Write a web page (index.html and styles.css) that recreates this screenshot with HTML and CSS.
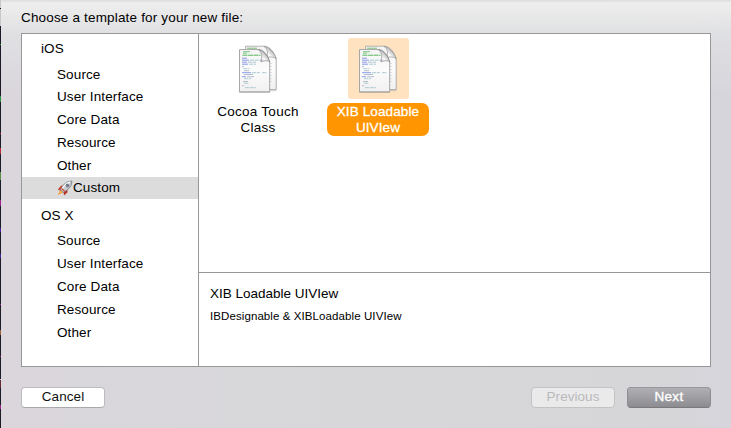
FILE: index.html
```html
<!DOCTYPE html>
<html lang="en">
<head>
<meta charset="utf-8">
<title>New file</title>
<link rel="stylesheet" href="styles.css">
</head>
<body>
<svg class="defs" width="0" height="0" aria-hidden="true">
  <defs>
    <linearGradient id="paper" x1="0" y1="0" x2="0" y2="1"><stop offset="0" stop-color="#f4f4f4"/><stop offset=".5" stop-color="#fcfcfc"/><stop offset="1" stop-color="#f1f1f1"/></linearGradient>
    <linearGradient id="curl" x1="0" y1="1" x2="1" y2="0"><stop offset="0" stop-color="#a8a8a8"/><stop offset=".35" stop-color="#fff"/><stop offset=".6" stop-color="#c4c4c4"/><stop offset="1" stop-color="#888"/></linearGradient>
    <symbol id="doc" viewBox="0 0 42 50">
      <path d="M8 1.5H29Q34 3 38.5 14V45.5H8Z" fill="#aaa" opacity=".45" transform="translate(0 .8)"/>
      <path d="M7.5 1.2H27Q34 2 38.2 13.5V44.5H7.5Z" fill="url(#paper)" stroke="#a5a5a5" stroke-width=".8"/>
      <path d="M9 3.2h10" stroke="#77b977" stroke-width="1"/>
      <path d="M33 18v21" stroke="#d2d7de" stroke-width="1.5" stroke-dasharray="1 2"/>
      <path d="M26 1.3Q31.5 5.5 28.5 12.5 35 11 38.2 13.8 35 3.5 26 1.3Z" fill="url(#curl)" stroke="#888" stroke-width=".6"/>
      <path d="M1.3 5H23Q28 8 32 18V47.8H1.3Z" fill="#777" opacity=".5"/>
      <path d="M1.5 4.5H22Q28 6 31.7 16.5V46.8H1.5Z" fill="url(#paper)" stroke="#999" stroke-width=".8"/>
      <path d="M5 6.7h7M5 8.2h4" stroke="#6dc174" stroke-width=".9"/>
      <path d="M4.5 10.2h18" stroke="#55b85d" stroke-width="1" stroke-dasharray="5 .5"/>
      <path d="M4 13.2h5M4 15.2h7M4 17.2h5M4 19.2h6M4 27.7h9M4 31.7h4" stroke="#6d83e2" stroke-width=".8"/>
      <path d="M12 15.2h13M10 17.2h8M11 19.2h7M5.5 23.7h6M14 27.7h8M24 27.7h5M6 33.7h7M6 38.2h5M7 42.7h11" stroke="#9bbcc9" stroke-width=".8" stroke-dasharray="4 .7"/>
      <path d="M4 21.7h2M6 25.7h5M6 29.5h9M9 31.7h7M5 36.5h5M4 40.7h2" stroke="#a3afc2" stroke-width=".8"/>
      <path d="M20.5 4.6Q26 9 22.8 16.8 29 14.5 31.8 17 29 7 20.5 4.6Z" fill="url(#curl)" stroke="#777" stroke-width=".6"/>
    </symbol>
  </defs>
</svg>
<main class="sheet">
  <h1 class="prompt">Choose a template for your new file:</h1>
  <section class="panel">
    <nav class="sidebar">
      <h2 class="group">iOS</h2>
      <ul>
        <li>Source</li><li>User Interface</li><li>Core Data</li><li>Resource</li><li>Other</li>
        <li class="selected"><svg class="rocket" viewBox="0 0 16 16" role="img" aria-label="Rocket">
          <path d="M.8 9.5l3.4-4 4 .8-4 5z" fill="#cf3f2c"/><path d="M10 8.5l.6 3.7-3.6 3.3-.5-4.5z" fill="#bd3024"/>
          <path d="M3.4 10L.8 15l5.2-2.5z" fill="#f08b2c"/><path d="M4 11L2 13.6l3-1.7z" fill="#ffda52"/>
          <path d="M15 1Q9.7.8 6 5.3L3.3 9.6l3 3 4.6-3.1Q15 6.2 15 1Z" fill="#c9cdd3" stroke="#6a6e76" stroke-width=".7"/>
          <path d="M13.2 2Q9.5 2.7 6.7 6.4L4.8 9.3" stroke="#f7f8fa" stroke-width="1.3" fill="none"/>
          <path d="M4.6 8.4l3 3" stroke="#c63b2d" stroke-width="1.2"/>
          <circle cx="10.5" cy="5.5" r="1.4" fill="#7b8591" stroke="#50565f" stroke-width=".6"/>
        </svg>Custom</li>
      </ul>
      <h2 class="group second">OS X</h2>
      <ul><li>Source</li><li>User Interface</li><li>Core Data</li><li>Resource</li><li>Other</li></ul>
    </nav>
    <div class="content">
      <div class="templates">
        <div class="template"><div class="thumb"><svg class="doc"><use href="#doc"/></svg></div><div class="label">Cocoa Touch<br>Class</div></div>
        <div class="template chosen"><div class="thumb"><svg class="doc"><use href="#doc"/></svg></div><div class="label">XIB Loadable<br>UIVIew</div></div>
      </div>
      <div class="details"><h3>XIB Loadable UIVIew</h3><p>IBDesignable &amp; XIBLoadable UIVIew</p></div>
    </div>
  </section>
  <footer class="actions">
    <button class="cancel">Cancel</button>
    <button class="previous" disabled>Previous</button>
    <button class="next">Next</button>
  </footer>
</main>
</body>
</html>
```
FILE: styles.css
```css
* { box-sizing: border-box; }
html, body { margin: 0; height: 100%; overflow: hidden; }
body {
  padding-left: 1px;
  font: 13.5px/16px "Liberation Sans", Arial, sans-serif;
  letter-spacing: .12px;
  color: #000;
  background: linear-gradient(#c8c8c8 0 8px, #111 8px 9px, #c8c8c8 9px 26px, transparent 26px),
    linear-gradient(transparent 44px, #22a044 44px 45px, transparent 45px 96px, #299044 96px 102px, transparent 102px 133px, #b42c35 133px 134px, transparent 134px 148px, #b42c35 148px 154px, transparent 154px 172px, #588e45 172px 180px, transparent 180px 200px, #9b218d 200px 206px, transparent 206px 228px, #46209b 228px 232px, transparent 232px 254px, #46209b 254px 258px, transparent 258px 304px, #9b218d 304px 305px, transparent 305px 330px, #946136 330px 335px, transparent 335px 356px, #9b218d 356px 357px, transparent 357px 379px, #c8b8ba 379px 380px, #632b34 380px 388px, transparent 388px 405px, #9b218d 405px 409px, transparent 409px), #1b1b28;
}
h1, h2, h3, p, ul { margin: 0; padding: 0; font-weight: 400; list-style: none; }
.defs { position: absolute; }
.sheet {
  height: 428px;
  padding: 9px 20px 0;
  background: linear-gradient(#dcdcde, rgba(235,235,237,0) 3px),
    linear-gradient(rgba(239,239,238,1), rgba(225,226,228,.8) 35px, rgba(218,218,220,0) 95px),
    linear-gradient(90deg, #dad6dc, #d7d7d9 45%, #d6d6d8 90%, #d6d5dc);
}
.prompt { height: 24px; font-size: 13.5px; line-height: 17px; letter-spacing: .17px; }
.panel { display: flex; width: 690px; height: 334px; border: 1px solid #979799; background: #fff; }
.sidebar { width: 177px; border-right: 1px solid #979799; }
.group { height: 29px; padding: 6px 0 0 19px; font-size: 13.5px; line-height: 17px; }
.group.second { height: 30.2px; padding-top: 7.2px; }
.sidebar li { display: flex; align-items: center; height: 22px; margin-bottom: .8px; padding: 1px 0 0 35px; }
.sidebar .selected { background: #dcdcdc; }
.rocket { width: 16px; height: 16px; margin-top: -1px; }
.content { flex: 1; }
.templates { display: flex; height: 239px; padding: 4px 0 0; margin-left: 0; border-bottom: 1px solid #979799; }
.template { display: flex; flex-direction: column; align-items: center; width: 120px; padding-right: 2px; }
.thumb { display: flex; justify-content: center; width: 61px; height: 61px; padding: 7px 0 0 2px; border-radius: 3px; }
.doc { width: 42px; height: 50px; }
.label { margin-top: 4px; height: 33px; width: 102px; padding-top: 1px; border-radius: 7px; text-align: center; letter-spacing: .25px; }
.chosen .thumb { background: #ffe3c1; }
.chosen .label { background: #ff9500; color: #fff; letter-spacing: .12px; -webkit-text-stroke: .3px #fff; }
.details { padding: 12px 11px; }
.details h3 { font-size: 13.5px; line-height: 17px; letter-spacing: 0; }
.details p { margin-top: 7px; font-size: 11.5px; line-height: 14px; letter-spacing: .09px; }
.actions { display: flex; width: 690px; margin-top: 20px; }
button { width: 84px; height: 21px; padding: 0 0 1px; border: 1px solid #bcbcbe; border-bottom-color: #a9a9ab; border-radius: 4px; background: #fff; font: inherit; letter-spacing: .1px; color: #111; }
.previous { margin-left: auto; background: #eaeaeb; border-color: #c3c3c5; color: #b9b9bb; letter-spacing: .05px; }
.next { margin-left: 12px; border-color: #98989c #8e8e92 #79797d; background: linear-gradient(#b0b0b4, #8c8c91); color: #fff; letter-spacing: .3px; -webkit-text-stroke: .35px #fff; }
```
